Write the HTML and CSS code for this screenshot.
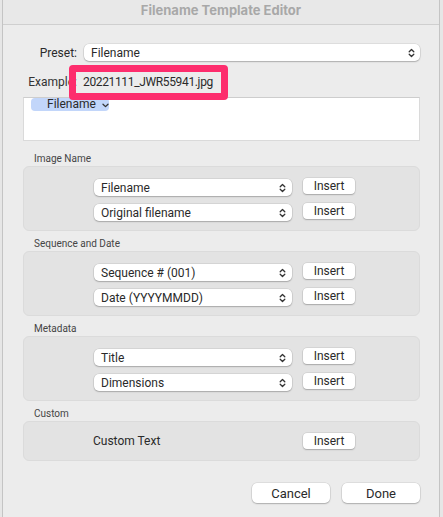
FILE: index.html
```html
<!DOCTYPE html>
<html>
<head>
<meta charset="utf-8">
<link rel="stylesheet" href="styles.css">
</head>
<body>
<div class="window">
  <div class="titlebar">Filename Template Editor</div>
  <div class="content">
    <div class="preset-row">
      <span class="field-label">Preset:</span>
      <div class="select select-wide">
        <span>Filename</span>
        <svg class="updown" width="7" height="10" viewBox="0 0 7 10"><path d="M1.2 3.8 L3.5 1.5 L5.8 3.8 M1.2 6.2 L3.5 8.5 L5.8 6.2"/></svg>
      </div>
    </div>
    <div class="example-row">
      <span class="field-label">Example:</span>
      <span class="example-value">20221111_JWR55941.jpg</span>
    </div>
    <div class="token-field">
      <span class="token">Filename<svg class="token-chev" width="7" height="5" viewBox="0 0 7 5"><path d="M1 1.2 L3.5 3.6 L6 1.2"/></svg></span>
    </div>

    <section class="group group-first">
      <div class="group-label">Image Name</div>
      <div class="group-box">
        <div class="row">
          <div class="select"><span>Filename</span><svg class="updown" width="7" height="10" viewBox="0 0 7 10"><path d="M1.2 3.8 L3.5 1.5 L5.8 3.8 M1.2 6.2 L3.5 8.5 L5.8 6.2"/></svg></div>
          <button class="btn-insert">Insert</button>
        </div>
        <div class="row">
          <div class="select"><span>Original filename</span><svg class="updown" width="7" height="10" viewBox="0 0 7 10"><path d="M1.2 3.8 L3.5 1.5 L5.8 3.8 M1.2 6.2 L3.5 8.5 L5.8 6.2"/></svg></div>
          <button class="btn-insert">Insert</button>
        </div>
      </div>
    </section>

    <section class="group">
      <div class="group-label">Sequence and Date</div>
      <div class="group-box">
        <div class="row">
          <div class="select"><span>Sequence # (001)</span><svg class="updown" width="7" height="10" viewBox="0 0 7 10"><path d="M1.2 3.8 L3.5 1.5 L5.8 3.8 M1.2 6.2 L3.5 8.5 L5.8 6.2"/></svg></div>
          <button class="btn-insert">Insert</button>
        </div>
        <div class="row">
          <div class="select"><span>Date (YYYYMMDD)</span><svg class="updown" width="7" height="10" viewBox="0 0 7 10"><path d="M1.2 3.8 L3.5 1.5 L5.8 3.8 M1.2 6.2 L3.5 8.5 L5.8 6.2"/></svg></div>
          <button class="btn-insert">Insert</button>
        </div>
      </div>
    </section>

    <section class="group">
      <div class="group-label">Metadata</div>
      <div class="group-box">
        <div class="row">
          <div class="select"><span>Title</span><svg class="updown" width="7" height="10" viewBox="0 0 7 10"><path d="M1.2 3.8 L3.5 1.5 L5.8 3.8 M1.2 6.2 L3.5 8.5 L5.8 6.2"/></svg></div>
          <button class="btn-insert">Insert</button>
        </div>
        <div class="row">
          <div class="select"><span>Dimensions</span><svg class="updown" width="7" height="10" viewBox="0 0 7 10"><path d="M1.2 3.8 L3.5 1.5 L5.8 3.8 M1.2 6.2 L3.5 8.5 L5.8 6.2"/></svg></div>
          <button class="btn-insert">Insert</button>
        </div>
      </div>
    </section>

    <section class="group">
      <div class="group-label">Custom</div>
      <div class="group-box group-box-custom">
        <div class="row">
          <span class="custom-text">Custom Text</span>
          <button class="btn-insert">Insert</button>
        </div>
      </div>
    </section>

    <div class="actions">
      <button class="btn-action">Cancel</button>
      <button class="btn-action">Done</button>
    </div>
  </div>
</div>
</body>
</html>
```

FILE: styles.css
```css
html, body {
  margin: 0;
  padding: 0;
}
body {
  background: #e6e6e6;
  height: 517px;
  overflow: hidden;
  font-family: Roboto, "Noto Sans", "Liberation Sans", sans-serif;
  color: #2a2a2a;
}
.window {
  margin-left: 2px;
  width: 438px;
  height: 517px;
  box-sizing: border-box;
  background: #ececec;
  border-left: 1px solid #c4c4c4;
  border-right: 1px solid #c4c4c4;
}
.titlebar {
  height: 25px;
  box-sizing: border-box;
  line-height: 20px;
  text-align: center;
  font-family: Inter, Roboto, sans-serif;
  font-size: 13px;
  font-weight: 700;
  color: #a8a8a8;
  background: #e8e8e8;
  border-bottom: 1px solid #cfcfcf;
}
.content {
  padding: 19px 19px 0 20px;
}
.preset-row {
  display: flex;
  align-items: center;
  height: 17px;
}
.field-label {
  width: 54px;
  text-align: right;
  font-size: 12px;
  flex: none;
  margin-right: 7px;
}
.select {
  height: 17px;
  box-sizing: border-box;
  background: #fff;
  border-radius: 5px;
  box-shadow: 0 0 0 0.5px rgba(0,0,0,0.12), 0 1px 1.5px rgba(0,0,0,0.22);
  display: flex;
  align-items: center;
  justify-content: space-between;
  padding: 0 6px 0 7px;
  font-size: 12px;
  width: 198px;
  flex: none;
}
.select-wide {
  flex: 1;
  width: auto;
  padding-right: 5px;
}
.updown {
  flex: none;
}
.updown path, .token-chev path {
  fill: none;
  stroke: #333;
  stroke-width: 1.3;
  stroke-linecap: round;
  stroke-linejoin: round;
}
.example-row {
  display: flex;
  align-items: center;
  margin-top: 13px;
  height: 16px;
  font-size: 12px;
}
.example-row .field-label {
  margin-right: 6px;
  color: #333;
}
.example-value {
  position: relative;
  letter-spacing: -0.35px;
}
.example-value::before {
  content: "";
  position: absolute;
  left: -14px;
  top: -10px;
  width: 159px;
  height: 35px;
  box-sizing: border-box;
  border: 7px solid #fd2d6d;
  border-radius: 4px;
}
.token-field {
  margin-top: 7px;
  height: 44px;
  box-sizing: border-box;
  background: #fff;
  border: 1px solid #dadada;
  border-top-color: #cdcdcd;
  padding-left: 7px;
}
.token {
  display: inline-flex;
  align-items: center;
  height: 13px;
  width: 78px;
  box-sizing: border-box;
  padding-left: 16px;
  background: #c2d6fa;
  border-radius: 4px;
  font-size: 12px;
  line-height: 13px;
  vertical-align: top;
}
.token-chev {
  margin-left: 6px;
  margin-top: 1px;
}
.group {
  margin-top: 7px;
}
.group-first {
  margin-top: 12px;
}
.group-label {
  font-size: 10px;
  line-height: 12px;
  padding-left: 11px;
  margin-bottom: 1px;
  color: #454545;
}
.group-box {
  background: #e3e3e3;
  border: 1px solid #dbdbdb;
  border-radius: 6px;
  padding: 12px 0 9px 70px;
  display: flex;
  flex-direction: column;
  gap: 8px;
}
.group-box-custom {
  padding-top: 11px;
  padding-bottom: 10px;
  padding-left: 69px;
}
.row {
  display: flex;
  align-items: flex-start;
  gap: 11px;
  height: 17px;
}
.btn-insert {
  margin: -1px 0 0 0;
  width: 52px;
  height: 16px;
  padding: 0;
  border: none;
  background: #fff;
  border-radius: 4px;
  box-shadow: 0 0 0 0.5px rgba(0,0,0,0.12), 0 1px 1.5px rgba(0,0,0,0.22);
  font-family: inherit;
  font-size: 12px;
  line-height: 14px;
  color: #2a2a2a;
}
.custom-text {
  width: 199px;
  font-size: 12px;
  line-height: 17px;
  flex: none;
}
.group-box-custom .btn-insert {
  margin-top: 0;
}
.actions {
  margin-top: 22px;
  display: flex;
  justify-content: flex-end;
  gap: 12px;
}
.btn-action {
  width: 78px;
  height: 20px;
  padding: 0;
  border: none;
  background: #fff;
  border-radius: 5px;
  box-shadow: 0 0 0 0.5px rgba(0,0,0,0.12), 0 1px 1.5px rgba(0,0,0,0.22);
  font-family: inherit;
  font-size: 13px;
  color: #2a2a2a;
}
```
